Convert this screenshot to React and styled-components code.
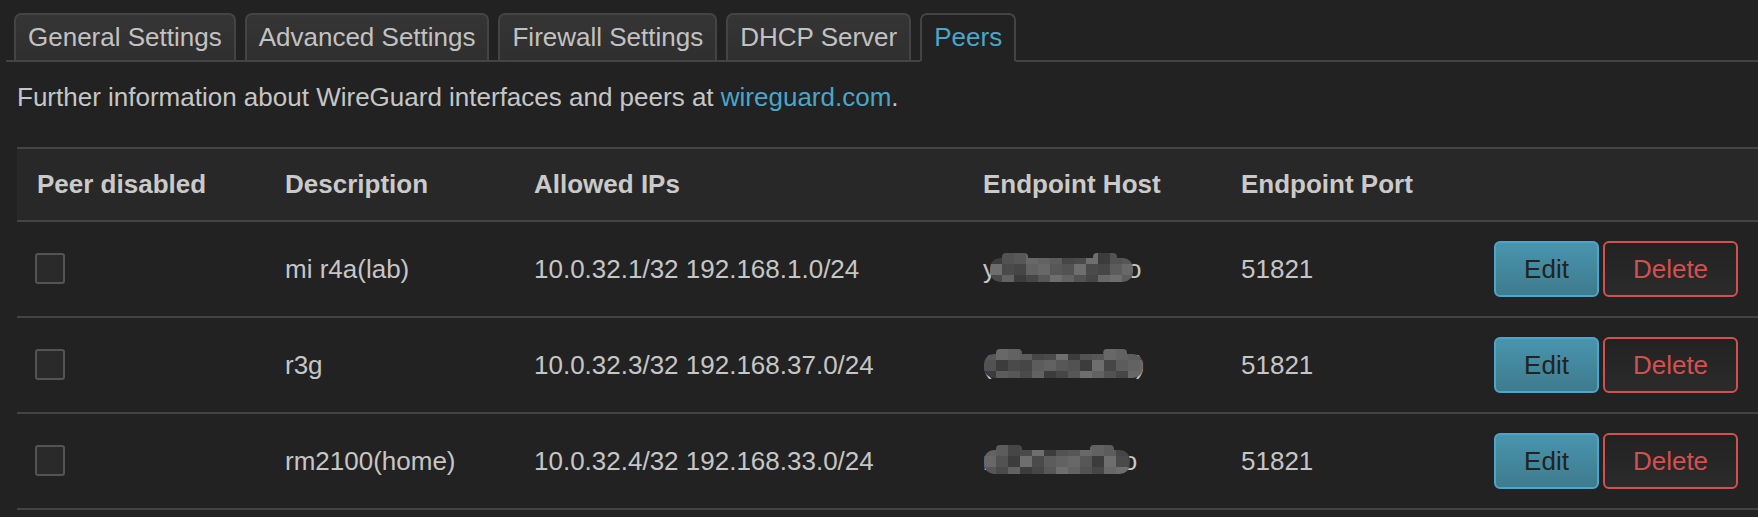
import styled, { createGlobalStyle } from 'styled-components';

const GlobalStyle = createGlobalStyle`
  body {
    margin: 0;
    background: #222222;
    color: #c6c6c6;
    font-family: "Liberation Sans", Arial, sans-serif;
    font-size: 26px;
  }
`;

const tabs = ['General Settings', 'Advanced Settings', 'Firewall Settings', 'DHCP Server', 'Peers'];

// host names are blurred in the screenshot, so only the ends show
const peers = [
  { desc: 'mi r4a(lab)', ips: '10.0.32.1/32 192.168.1.0/24', head: 'y', tail: 'o', port: '51821', seed: 1, blur: { w: 143, l: -6, r: -6 } },
  { desc: 'r3g', ips: '10.0.32.3/32 192.168.37.0/24', head: '(', tail: ')', port: '51821', seed: 2, blur: { w: 159, l: -8, r: -7 } },
  { desc: 'rm2100(home)', ips: '10.0.32.4/32 192.168.33.0/24', head: 'r', tail: 'o', port: '51821', seed: 3, blur: { w: 146, l: -8, r: -7 } },
];

// grey tones for the mosaic
const shades = ['#4a4a4a', '#5c5c5c', '#686868', '#525252', '#6e6e6e', '#464646', '#626262', '#575757', '#3c3c3c'];

const Mosaic = ({ seed, width }) => {
  const cells = [];
  const cols = Math.ceil(width / 12);
  for (let r = 0; r < 3; r++) {
    for (let c = 0; c < cols; c++) {
      const shade = shades[(c * 4 + r * 5 + seed * 7 + ((c * r + seed) % 4)) % shades.length];
      cells.push(<rect key={`${r}-${c}`} x={c * 12} y={r * 11} width="12" height="11" fill={shade} />);
    }
  }
  return (
    <svg width={width} height="32" viewBox={`0 0 ${width} 32`}>
      <defs>
        <clipPath id={`blob${seed}`}>
          <rect x="0" y="5" width={width} height="24" rx="10" />
          <rect x="12" y="0" width="26" height="14" rx="4" />
          <rect x={width - 40} y="0" width="24" height="14" rx="4" />
        </clipPath>
      </defs>
      <g clipPath={`url(#blob${seed})`}>{cells}</g>
    </svg>
  );
};

const App = () => {
  return (
    <Page>
      <GlobalStyle />
      <TabBar>
        {tabs.map((t) => (
          <Tab key={t} $active={t === 'Peers'}>{t}</Tab>
        ))}
      </TabBar>

      <Body>
        <Info>
          Further information about WireGuard interfaces and peers at <Link>wireguard.com</Link>.
        </Info>

        <Table>
          <colgroup>
            <col style={{ width: 248 }} />
            <col style={{ width: 249 }} />
            <col style={{ width: 449 }} />
            <col style={{ width: 258 }} />
            <col style={{ width: 220 }} />
            <col />
          </colgroup>
          <thead>
            <HeadRow>
              <Th>Peer disabled</Th>
              <Th>Description</Th>
              <Th>Allowed IPs</Th>
              <Th>Endpoint Host</Th>
              <Th>Endpoint Port</Th>
              <Th />
            </HeadRow>
          </thead>
          <tbody>
            {peers.map((p) => (
              <Row key={p.desc}>
                <Td>
                  <Checkbox />
                </Td>
                <Td>{p.desc}</Td>
                <Td>{p.ips}</Td>
                <Td>
                  <Host>
                    <span>{p.head}</span>
                    <MosaicWrap $l={p.blur.l} $r={p.blur.r}>
                      <Mosaic seed={p.seed} width={p.blur.w} />
                    </MosaicWrap>
                    <span>{p.tail}</span>
                  </Host>
                </Td>
                <Td>{p.port}</Td>
                <ActionCell>
                  <Actions>
                    <EditButton>Edit</EditButton>
                    <DeleteButton>Delete</DeleteButton>
                  </Actions>
                </ActionCell>
              </Row>
            ))}
          </tbody>
        </Table>
      </Body>
    </Page>
  );
};

const Page = styled.div`
  padding-top: 13px;
`;

const TabBar = styled.ul`
  display: flex;
  gap: 9px;
  margin: 0 0 0 6px;
  padding: 0 0 0 8px;
  list-style: none;
  border-bottom: 2px solid #444;
`;

const Tab = styled.li`
  padding: 7px 12px 8px;
  line-height: 30px;
  margin-bottom: -2px;
  border: 2px solid #444;
  border-bottom: ${(p) => (p.$active ? '2px solid #222' : '2px solid #444')};
  border-radius: 7px 7px 0 0;
  background: ${(p) => (p.$active ? '#222' : 'linear-gradient(#353535, #2f2f2f)')};
  color: ${(p) => (p.$active ? '#49a7c9' : '#c2c2c2')};
`;

const Body = styled.div`
  padding: 0 0 0 17px;
`;

const Info = styled.p`
  margin: 0;
  padding: 20px 0 0;
  line-height: 30px;
  height: 65px;
`;

const Link = styled.a`
  color: #49a7c9;
  text-decoration: none;
`;

const Table = styled.table`
  width: 100%;
  border-collapse: collapse;
  table-layout: fixed;
`;

const HeadRow = styled.tr`
  background: #282828;
  border-top: 2px solid #444;
  border-bottom: 2px solid #444;
`;

const Th = styled.th`
  height: 71px;
  padding: 0 0 0 20px;
  text-align: left;
  font-weight: bold;
  color: #cacaca;
`;

const Row = styled.tr`
  border-bottom: 2px solid #444;
`;

const Td = styled.td`
  height: 94px;
  padding: 0 0 0 20px;
  vertical-align: middle;
  white-space: nowrap;
`;

const ActionCell = styled(Td)`
  padding-right: 20px;
`;

const Actions = styled.div`
  display: flex;
  justify-content: flex-end;
  gap: 4px;
`;

const Checkbox = styled.span`
  display: block;
  box-sizing: border-box;
  width: 30px;
  height: 31px;
  margin-left: -2px;
  margin-top: -2px;
  border: 2px solid #545454;
  border-radius: 3px;
  background: #2a2a2a;
`;

const Host = styled.div`
  display: flex;
  align-items: center;
`;

const MosaicWrap = styled.span`
  display: flex;
  position: relative;
  margin: 0 ${(p) => p.$r}px 0 ${(p) => p.$l}px;
`;

const Button = styled.button`
  height: 56px;
  border-radius: 6px;
  border: 2px solid;
  font-family: "Liberation Sans", Arial, sans-serif;
  font-size: 26px;
  cursor: pointer;
`;

const EditButton = styled(Button)`
  width: 105px;
  border-color: #4aa6cb;
  background: linear-gradient(#4994ae, #3e7b8d);
  color: #222;
`;

const DeleteButton = styled(Button)`
  width: 135px;
  border-color: #d4504d;
  background: linear-gradient(#222, #2b2b2b);
  color: #d4504d;
`;

export default App;
